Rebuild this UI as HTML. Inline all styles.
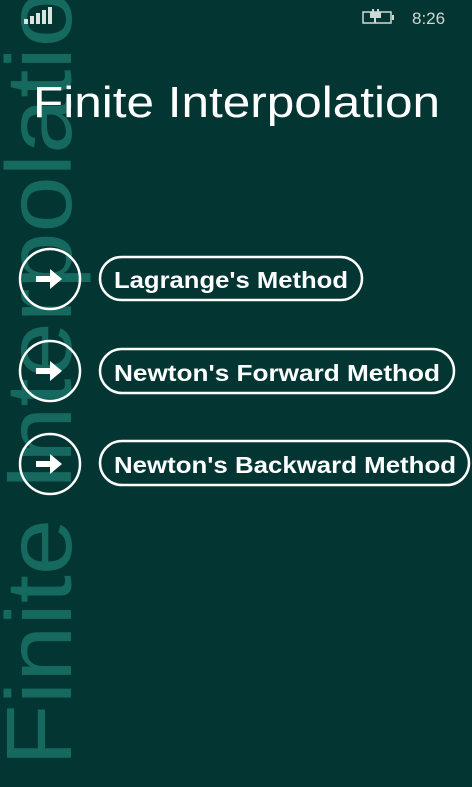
<!DOCTYPE html>
<html><head><meta charset="utf-8"><style>
html,body{margin:0;padding:0;background:#033633;width:472px;height:787px;overflow:hidden;font-family:"Liberation Sans",sans-serif;}
</style></head><body>
<svg width="472" height="787" viewBox="0 0 472 787" xmlns="http://www.w3.org/2000/svg" style="position:absolute;left:0;top:0">
<rect width="472" height="787" fill="#033633"/>
<text transform="translate(71,766) rotate(-90)" font-family="Liberation Sans, sans-serif" font-size="93" fill="#16695f" textLength="775" lengthAdjust="spacingAndGlyphs">Finite Interpolatio</text>
<!-- signal -->
<g fill="#d8e4e2">
<rect x="24" y="19" width="4" height="5"/><rect x="30" y="16" width="4" height="8"/><rect x="36" y="13" width="4" height="11"/><rect x="42" y="10" width="4" height="14"/><rect x="48" y="7" width="4" height="17"/>
</g>
<!-- battery -->
<g fill="none" stroke="#cfd8d6" stroke-width="1.5">
<rect x="363" y="12" width="28" height="11"/>
</g>
<rect x="392" y="15" width="2" height="5" fill="#cfd8d6"/>
<path d="M373 9v5M378 9v5M371 13h9v4h-9z M375 17v6" stroke="#cfd8d6" stroke-width="2" fill="#cfd8d6"/>
<text x="412" y="24" font-size="17" fill="#cfd8d6" font-family="Liberation Sans, sans-serif">8:26</text>
<text x="33" y="117" font-size="44" fill="#fff" font-family="Liberation Sans, sans-serif" textLength="407" lengthAdjust="spacingAndGlyphs">Finite Interpolation</text>
<g stroke="#fff" stroke-width="2.5" fill="none">
<circle cx="50" cy="279" r="30"/><circle cx="50" cy="371" r="30"/><circle cx="50" cy="464" r="30"/>
<rect x="100" y="257" width="262" height="43" rx="21.5"/>
<rect x="100" y="349" width="354" height="44" rx="22"/>
<rect x="100" y="441" width="369" height="44" rx="22"/>
</g>
<g fill="#fff">
<path d="M36 276h14v-7l12 10-12 10v-7h-14z"/>
<path d="M36 368h14v-7l12 10-12 10v-7h-14z"/>
<path d="M36 461h14v-7l12 10-12 10v-7h-14z"/>
</g>
<g font-family="Liberation Sans, sans-serif" font-size="23" font-weight="bold" fill="#fff">
<text x="114" y="288" textLength="234" lengthAdjust="spacingAndGlyphs">Lagrange's Method</text>
<text x="114" y="381" textLength="326" lengthAdjust="spacingAndGlyphs">Newton's Forward Method</text>
<text x="114" y="473" textLength="342" lengthAdjust="spacingAndGlyphs">Newton's Backward Method</text>
</g>
</svg>
</body></html>
